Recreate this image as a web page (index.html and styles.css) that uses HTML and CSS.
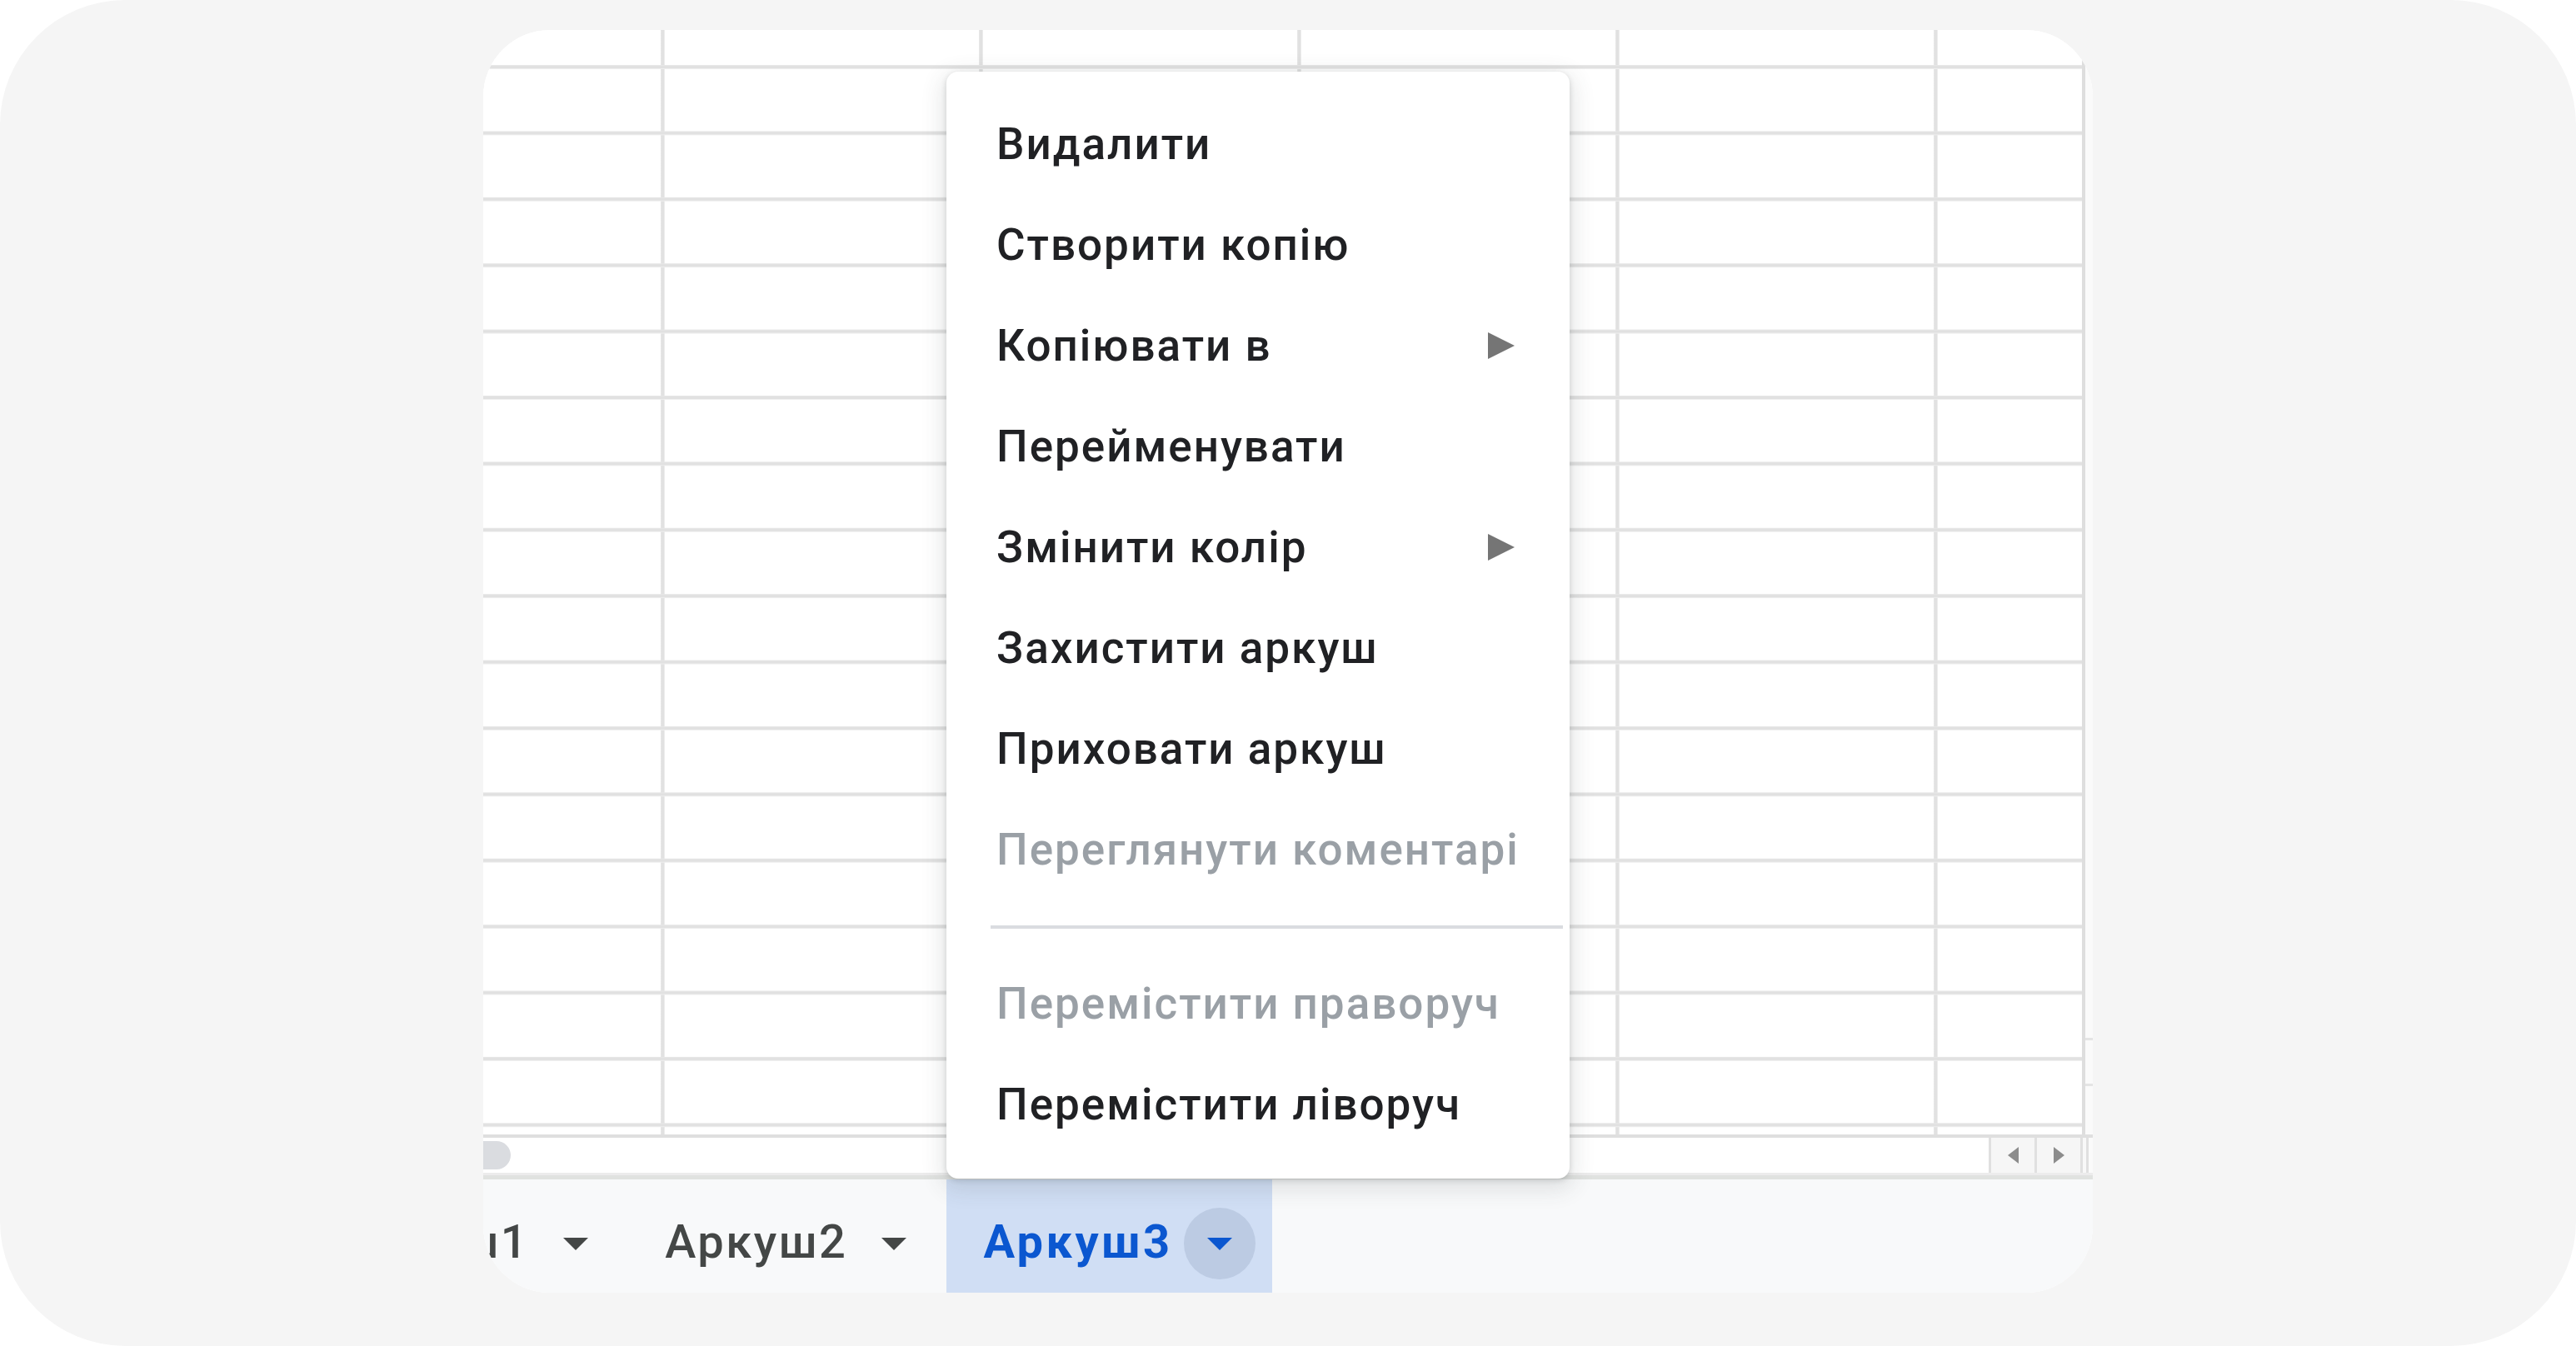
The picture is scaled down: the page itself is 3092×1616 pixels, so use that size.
FILE: index.html
```html
<!DOCTYPE html>
<html lang="uk">
<head>
<meta charset="utf-8">
<title>Аркуші</title>
<link rel="stylesheet" href="styles.css">
</head>
<body>
<div class="frame">
  <div class="card">
    <div class="sheet">
      <div class="cells"></div>
      <div class="vscroll"><span class="vmark"></span><span class="vmark"></span></div>
    </div>
    <div class="hscroll">
      <div class="track"><div class="thumb"></div></div>
      <div class="sbtn"><svg width="13" height="20" viewBox="0 0 13 20"><polygon points="13,0 13,20 0,10" fill="#8c8c8c"/></svg></div>
      <div class="sbtn"><svg width="13" height="20" viewBox="0 0 13 20"><polygon points="0,0 0,20 13,10" fill="#8c8c8c"/></svg></div>
      <div class="scorner"></div>
    </div>
    <div class="tabbar">
      <div class="tabs">
        <div class="tab">
          <span class="tab-name">Аркуш1</span>
          <span class="tab-drop"><svg width="30" height="15" viewBox="0 0 30 15"><polygon points="0,0 30,0 15,15" fill="currentColor"/></svg></span>
        </div>
        <div class="tab">
          <span class="tab-name">Аркуш2</span>
          <span class="tab-drop"><svg width="30" height="15" viewBox="0 0 30 15"><polygon points="0,0 30,0 15,15" fill="currentColor"/></svg></span>
        </div>
        <div class="tab active">
          <span class="tab-name">Аркуш3</span>
          <span class="tab-drop"><svg width="30" height="15" viewBox="0 0 30 15"><polygon points="0,0 30,0 15,15" fill="currentColor"/></svg></span>
        </div>
      </div>
    </div>
    <div class="menu">
      <div class="item"><span>Видалити</span></div>
      <div class="item"><span>Створити копію</span></div>
      <div class="item"><span>Копіювати в</span><svg class="sub" width="32" height="32" viewBox="0 0 32 32"><polygon points="0,0 0,32 32,16" fill="#757575"/></svg></div>
      <div class="item"><span>Перейменувати</span></div>
      <div class="item"><span>Змінити колір</span><svg class="sub" width="32" height="32" viewBox="0 0 32 32"><polygon points="0,0 0,32 32,16" fill="#757575"/></svg></div>
      <div class="item"><span>Захистити аркуш</span></div>
      <div class="item"><span>Приховати аркуш</span></div>
      <div class="item disabled"><span>Переглянути коментарі</span></div>
      <div class="sep"></div>
      <div class="item disabled"><span>Перемістити праворуч</span></div>
      <div class="item"><span>Перемістити ліворуч</span></div>
    </div>
  </div>
</div>
</body>
</html>
```
FILE: styles.css
```css
html, body {
  margin: 0;
  padding: 0;
  background: #ffffff;
}

body {
  font-family: Roboto, "Liberation Sans", Arial, sans-serif;
  width: 3092px;
  height: 1616px;
  overflow: hidden;
}

.frame {
  width: 3092px;
  height: 1616px;
  box-sizing: border-box;
  background: #f5f5f5;
  border-radius: 150px;
  padding: 36px 580px 64px 580px;
  display: flex;
}

.card {
  position: relative;
  flex: 1;
  display: flex;
  flex-direction: column;
  background: #ffffff;
  border-radius: 80px;
  overflow: hidden;
}

/* grid */
.sheet {
  height: 1326px;
  display: flex;
}

.cells {
  flex: 1;
  background-color: #ffffff;
  background-image:
    linear-gradient(to bottom, transparent 74.4px, #eeeeee 74.4px, #e1e1e1 75.4px, #e1e1e1 78.4px, #eeeeee 78.4px),
    linear-gradient(to right, #ececec 0, #e1e1e1 1px, #e1e1e1 4px, #ececec 4px, #ececec 5px, transparent 5px);
  background-size: 100% 79.4px, 382px 100%;
  background-position: 0 -32.4px, 213px 0;
  background-repeat: repeat;
}

.vscroll {
  width: 9px;
  border-left: 4px solid #dedede;
  background: #fafafa;
  display: flex;
  flex-direction: column;
  padding-top: 1210px;
  gap: 52px;
}

.vmark {
  height: 3px;
  background: #e4e4e4;
}

/* horizontal scrollbar */
.hscroll {
  height: 42px;
  border-top: 4px solid #dfdfdf;
  border-bottom: 3px solid #ececec;
  display: flex;
  background: #ffffff;
}

.track {
  flex: 1;
  display: flex;
  align-items: center;
}

.thumb {
  margin-left: -40px;
  width: 73px;
  height: 34px;
  border-radius: 17px;
  background: #dadce0;
}

.sbtn {
  width: 52px;
  border-left: 3px solid #e0e0e0;
  background: #f6f6f6;
  display: flex;
  align-items: center;
  justify-content: center;
}

.scorner {
  width: 12px;
  border-left: 3px solid #e0e0e0;
  background: linear-gradient(to right, #f8f8f8 0 4px, #e0e0e0 4px 7px, #fafafa 7px);
}

/* tab bar */
.tabbar {
  flex: 1;
  background: #f8f9fa;
  border-top: 5px solid #e0e2e0;
  display: flex;
}

.tabs {
  display: flex;
  margin-left: -208px;
}

.tab {
  display: flex;
  align-items: center;
  padding: 14px 20px 0 44px;
  gap: 13px;
  color: #444746;
  font-size: 56px;
  font-weight: 500;
  letter-spacing: 2.5px;
}

.tab-name {
  line-height: 1;
}

.tab-drop {
  width: 86px;
  height: 86px;
  border-radius: 50%;
  display: flex;
  align-items: center;
  justify-content: center;
  margin-top: 4px;
}

.tab.active {
  background: #d0def4;
  color: #0b57d0;
  font-weight: 700;
  letter-spacing: 3.5px;
}

.tab.active .tab-drop {
  background: #bccbe3;
}

/* context menu */
.menu {
  position: absolute;
  left: 556px;
  top: 50px;
  width: 748px;
  box-sizing: border-box;
  padding: 26px 0 29px 0;
  background: #ffffff;
  border-radius: 14px;
  box-shadow: 0 2px 6px rgba(60, 64, 67, 0.2), 0 8px 26px 6px rgba(60, 64, 67, 0.12);
  z-index: 5;
}

.item {
  height: 121px;
  display: flex;
  align-items: center;
  justify-content: space-between;
  padding: 0 66px 0 60px;
  font-size: 53px;
  font-weight: 500;
  letter-spacing: 2px;
  color: #202124;
  white-space: nowrap;
}

.item.disabled {
  color: #9aa0a6;
}

.sep {
  height: 4px;
  margin: 31px 8px 29px 53px;
  background: #dadce0;
}
```
